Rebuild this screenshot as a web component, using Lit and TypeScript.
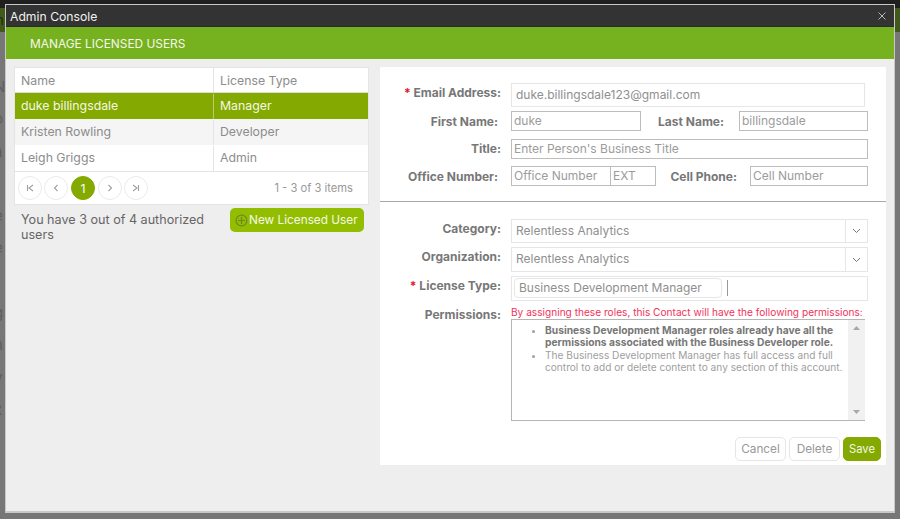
import { LitElement, html, css, svg } from "lit";
import { customElement } from "lit/decorators.js";

const chevron = (d: string) => html`<svg width="12" height="12" viewBox="0 0 12 12" fill="none" stroke="#a0a0a0" stroke-width="1.1">${svg`<path d=${d}></path>`}</svg>`;

@customElement("app-root")
export class AppRoot extends LitElement {
  static styles = css`
    :host { display: block; position: relative; width: 900px; height: 519px; overflow: hidden; background: #777; font-family: Inter, "Liberation Sans", sans-serif; color: #8c8c8c; font-size: 12.3px; }
    * { box-sizing: border-box; }
    .back { display: flex; flex-direction: column; height: 519px; }
    .back-top { height: 8px; background: #1f1f1f; flex: none; }
    .back-green { height: 24px; background: #41591a; flex: none; color: #1c2a08; font-size: 13px; line-height: 24px; padding-left: 0; text-indent: -4px; }
    .back-rows { flex: 1; background: #777; padding-top: 39px; display: flex; flex-direction: column; color: #5f5f5f; font-size: 15px; }
    .back-rows span { height: 32.3px; line-height: 32px; margin-left: -6px; }
    .window { position: absolute; left: 5px; top: 4px; width: 890px; height: 509px; border: 1px solid #c9c9c9; border-bottom-width: 2px; background: #eee; display: flex; flex-direction: column; }
    .titlebar { height: 22px; background: #333; color: #f2f2f2; font-size: 12.2px; display: flex; align-items: center; justify-content: space-between; padding: 1px 8px 0 4px; border-bottom: 1px solid #2c2c2c; flex: none; }
    .close { width: 8px; height: 8px; display: block; }
    .band { height: 32px; background: #76b11f; color: #f4f8e8; font-size: 11.9px; display: flex; align-items: center; padding-left: 24px; flex: none; }
    .content { display: flex; padding: 8px 8px 0 8px; gap: 11px; align-items: flex-start; }
    .left { width: 355px; flex: none; }
    .grid { border: 1px solid #e4e4e4; background: #fff; }
    .row { display: grid; grid-template-columns: 198px 1fr; height: 26px; align-items: center; border-top: 1px solid transparent; }
    .row > span { padding-left: 6px; line-height: 24px; height: 100%; display: block; }
    .row > span + span { border-left: 1px solid #e4e4e4; }
    .row.head { height: 25px; border-top: 0; border-bottom: 1px solid #dcdcdc; }
    .row.head > span { line-height: 25px; }
    .row.sel { background: #84a900; color: #f6f8e6; }
    .row.sel > span + span { border-left-color: #b9cc72; }
    .row.alt { background: #f5f5f5; }
    .pager { display: flex; align-items: center; height: 33px; padding: 0 0 0 3px; gap: 2px; border-top: 1px solid #e4e4e4; }
    .pg { width: 24px; height: 24px; border-radius: 50%; border: 1px solid #ebebeb; display: flex; align-items: center; justify-content: center; color: #fff; background: #fff; }
    .pg.on { background: #84a900; border-color: #84a900; margin: 0 1px; }
    .count { margin-left: auto; padding-right: 15px; color: #999; font-size: 11.2px; }
    .auth { display: flex; justify-content: space-between; align-items: flex-start; padding: 3px 5px 0 7px; }
    .auth p { margin: 4px 0 0; width: 195px; color: #666; line-height: 15px; font-size: 12.6px; }
    .new { height: 24px; width: 134px; background: #92bd00; color: #f6f9e6; border-radius: 5px; display: flex; align-items: center; gap: 1px; padding-left: 5px; font-size: 11.8px; white-space: nowrap; }
    .right { width: 506px; height: 398px; background: #fff; flex: none; padding-top: 16px; display: flex; flex-direction: column; font-size: 12px; }
    .f { display: flex; align-items: flex-start; }
    .lb { font-weight: 700; color: #777; font-size: 12px; text-align: right; white-space: nowrap; flex: none; }
    .req { color: #e8102a; }
    .inp { border: 1px solid #bdbdbd; height: 20px; line-height: 18px; padding-left: 2px; color: #9c9c9c; white-space: nowrap; flex: none; overflow: hidden; }
    .soft { border: 1px solid #e6e6e6; height: 24px; line-height: 22px; padding-left: 4px; color: #8f8f8f; flex: none; }
    .r1 { height: 28px; }
    .r1 .lb { width: 121px; margin-top: 2px; }
    .r1 .soft { width: 354px; margin-left: 10px; }
    .r2 { height: 28px; }
    .r3 { height: 27px; }
    .r4 { height: 35px; }
    .r5 { height: 28px; }
    .l1 { width: 118px; margin: 3px 13px 0 0; }
    .l2 { width: 83px; margin: 3px 15px 0 0; }
    .l3 { width: 121px; margin: 2px 10px 0 0; }
    .l4 { width: 81px; margin: 3px 13px 0 0; }
    .hr { height: 1px; background: #a8a8a8; margin-bottom: 17px; flex: none; }
    .sel-box { width: 357px; display: flex; justify-content: space-between; padding: 0; }
    .sel-box .t { padding-left: 4px; }
    .org { height: 25px; }
    .caret { width: 22px; border-left: 1px solid #e6e6e6; display: flex; align-items: center; justify-content: center; height: 100%; }
    .lic-row { height: 28px; }
    .lic { width: 357px; height: 25px; padding: 1px 0 0 2px; display: flex; align-items: flex-start; gap: 5px; }
    .chip { width: 208px; height: 20px; border: 1px solid #e6e6e6; border-radius: 4px; line-height: 18px; padding-left: 4px; color: #8f8f8f; }
    .cur { width: 1px; height: 16px; background: #999; margin-top: 2px; }
    .perm { display: flex; }
    .perm .lb { width: 121px; margin: 3px 10px 0 0; }
    .warn { color: #f0345a; font-size: 10.15px; line-height: 14px; margin-top: 1px; white-space: nowrap; }
    .area { width: 354px; height: 102px; border: 1px solid #b5b5b5; border-right: 0; display: flex; font-size: 10.15px; line-height: 12.4px; color: #a0a0a0; }
    .area ul { margin: 4px 0 0; padding: 0 0 0 33px; flex: 1; }
    .area li b { color: #777; font-weight: 700; font-size: 10.25px; }
    .sb { width: 17px; background: #f1f1f1; flex: none; display: flex; flex-direction: column; justify-content: space-between; align-items: center; padding: 6px 0; }
    .actions { display: flex; justify-content: flex-end; gap: 3px; padding: 16px 5px 0 0; }
    .btn { height: 24px; border: 1px solid #e6e6e6; border-radius: 5px; line-height: 23px; text-align: center; color: #999; background: #fff; font-size: 11.8px; }
    .b1 { width: 51px; } .b2 { width: 51px; }
    .save { width: 38px; background: #84a900; border-color: #84a900; color: #f6f8e6; font-size: 11.2px; }
  `;

  render() {
    const pageIcon = (d: string) => html`<span class="pg">${chevron(d)}</span>`;
    const caret = html`<span class="caret"><svg width="9" height="6" viewBox="0 0 9 6" fill="none" stroke="#777" stroke-width="1"><path d="M1 1l3.5 3.5L8 1"></path></svg></span>`;
    return html`
      <div class="back">
        <div class="back-top"></div>
        <div class="back-green">n</div>
        <div class="back-rows">
          ${["N", "o", "a", "r", "e", "e", "l", "g", "h", "y", "x", "l"].map((c) => html`<span>${c}</span>`)}
        </div>
      </div>
      <div class="window">
        <div class="titlebar">
          <span>Admin Console</span>
          <svg class="close" viewBox="0 0 8 8" fill="none" stroke="#b5b5b5" stroke-width="1"><path d="M.5.5l7 7M7.5.5l-7 7"></path></svg>
        </div>
        <div class="band">MANAGE LICENSED USERS</div>
        <div class="content">
          <div class="left">
            <div class="grid">
              <div class="row head"><span>Name</span><span>License Type</span></div>
              <div class="row sel"><span>duke billingsdale</span><span>Manager</span></div>
              <div class="row alt"><span>Kristen Rowling</span><span>Developer</span></div>
              <div class="row"><span>Leigh Griggs</span><span>Admin</span></div>
              <div class="pager">
                ${pageIcon("M3.5 3v6M9 3L5 6l4 3")}
                ${pageIcon("M7.5 3L4.5 6l3 3")}
                <span class="pg on">1</span>
                ${pageIcon("M4.5 3l3 3-3 3")}
                ${pageIcon("M8.5 3v6M3 3l4 3-4 3")}
                <span class="count">1 - 3 of 3 items</span>
              </div>
            </div>
            <div class="auth">
              <p>You have 3 out of 4 authorized users</p>
              <div class="new">
                <svg width="13" height="13" viewBox="0 0 13 13" fill="none" stroke="#6f8a22" stroke-width="1.2"><circle cx="6.5" cy="6.5" r="5.4"></circle><path d="M6.5 3v7M3 6.5h7"></path></svg>
                <span>New Licensed User</span>
              </div>
            </div>
          </div>
          <div class="right">
            <div class="f r1"><span class="lb"><span class="req">*</span> Email Address:</span><span class="soft">duke.billingsdale123@gmail.com</span></div>
            <div class="f r2"><span class="lb l1">First Name:</span><span class="inp" style="width:130px">duke</span><span class="lb l2">Last Name:</span><span class="inp" style="width:129px">billingsdale</span></div>
            <div class="f r3"><span class="lb l3">Title:</span><span class="inp" style="width:357px">Enter Person's Business Title</span></div>
            <div class="f r4"><span class="lb l1">Office Number:</span><span class="inp" style="width:100px">Office Number</span><span class="inp" style="width:46px;margin-left:-1px">EXT</span><span class="lb l4">Cell Phone:</span><span class="inp" style="width:118px">Cell Number</span></div>
            <div class="hr"></div>
            <div class="f r5"><span class="lb l3">Category:</span><span class="soft sel-box"><span class="t">Relentless Analytics</span>${caret}</span></div>
            <div class="f r5" style="height:29px"><span class="lb l3">Organization:</span><span class="soft sel-box org"><span class="t">Relentless Analytics</span>${caret}</span></div>
            <div class="f lic-row"><span class="lb l3"><span class="req">*</span> License Type:</span><span class="soft lic"><span class="chip">Business Development Manager</span><span class="cur"></span></span></div>
            <div class="perm">
              <span class="lb">Permissions:</span>
              <div>
                <div class="warn">By assigning these roles, this Contact will have the following permissions:</div>
                <div class="area">
                  <ul>
                    <li><b>Business Development Manager roles already have all the permissions associated with the Business Developer role.</b></li>
                    <li>The Business Development Manager has full access and full control to add or delete content to any section of this account.</li>
                  </ul>
                  <div class="sb">
                    <svg width="7" height="4" viewBox="0 0 7 4"><path d="M3.5 0L7 4H0z" fill="#a8a8a8"></path></svg>
                    <svg width="7" height="4" viewBox="0 0 7 4"><path d="M0 0h7L3.5 4z" fill="#a8a8a8"></path></svg>
                  </div>
                </div>
              </div>
            </div>
            <div class="actions">
              <span class="btn b1">Cancel</span><span class="btn b2">Delete</span><span class="btn save">Save</span>
            </div>
          </div>
        </div>
      </div>
    `;
  }
}
